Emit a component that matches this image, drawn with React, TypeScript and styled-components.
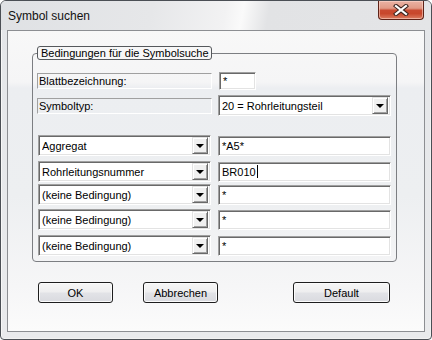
import React from "react";
import styled, { createGlobalStyle } from "styled-components";

const Global = createGlobalStyle`
  html, body { margin: 0; padding: 0; background: #ffffff; }
  body { font-family: "Liberation Sans", Arial, sans-serif; font-size: 11px; color: #000; }
  * { box-sizing: border-box; }
`;

const Window = styled.div`
  width: 432px;
  height: 340px;
  border: 1px solid #4b4f55;
  border-radius: 6px 6px 4px 4px;
  background: linear-gradient(180deg, #e4e6e9 0%, #e9eaec 100%);
  box-shadow: inset 1px 1px 0 #f7f7f7, inset -1px -1px 0 #f2f2f2;
  display: flex;
  flex-direction: column;
  overflow: hidden;
`;

const TitleBar = styled.div`
  height: 29px;
  display: flex;
  align-items: center;
  justify-content: space-between;
  padding-left: 7px;
  padding-right: 7px;
  background: linear-gradient(100deg, #dfe1e4 0%, #e6e7e9 35%, #f2f2f3 52%, #fafafa 56%, #e2e3e5 62%, #e4e5e7 100%);
`;

const Title = styled.span`
  font-family: "Liberation Sans", Arial, sans-serif;
  font-size: 12px;
  color: #111;
  margin-top: 1px;
`;

const CloseButton = styled.div`
  align-self: flex-start;
  width: 46px;
  height: 20px;
  margin-top: -1px;
  border: 1px solid #5e2217;
  border-top-color: #7a3a2e;
  border-radius: 0 0 4px 4px;
  background: linear-gradient(180deg, #eab2a4 0%, #e19a86 40%, #c94a31 52%, #c8472c 70%, #dc7d62 100%);
  box-shadow: inset 0 0 0 1px rgba(255, 220, 210, 0.55);
  display: flex;
  align-items: center;
  justify-content: center;
`;

const ClientWrap = styled.div`
  flex: 1;
  display: flex;
  padding: 0 6px 7px 6px;
`;

const Client = styled.div`
  flex: 1;
  border: 1px solid #8c8e92;
  background: linear-gradient(180deg, #f8f8f8 0%, #f5f5f6 17%, #eceef1 19%, #edeff1 55%, #f6f6f7 85%, #fbfbfb 100%);
  display: flex;
  flex-direction: column;
  padding-left: 24px;
`;

const Group = styled.fieldset`
  margin: 15px 0 0 0;
  width: 365px;
  padding: 0 5px 5px 4px;
  border: 1px solid #7c7e82;
  border-radius: 4px;
  min-width: 0;
`;

const Legend = styled.legend`
  margin-left: 0;
  padding: 0 2px 0 3px;
  height: 14px;
  line-height: 12px;
  border: 1px solid #55585c;
  border-radius: 3px;
  font-size: 11px;
  white-space: nowrap;
`;

const Row = styled.div<{ $top: number; $h: number }>`
  display: flex;
  align-items: center;
  height: ${(p) => p.$h}px;
  margin-top: ${(p) => p.$top}px;
  gap: 6px;
`;

const Label = styled.div`
  width: 175px;
  height: 16px;
  line-height: 14px;
  padding-left: 1px;
  border: 1px solid;
  border-color: #a0a0a0 #ffffff #ffffff #a0a0a0;
  white-space: nowrap;
`;

const sunken = `
  background: #ffffff;
  border: 1px solid;
  border-color: #a0a0a0 #ffffff #ffffff #a0a0a0;
  box-shadow: inset 1px 1px 0 #696969, inset -1px -1px 0 #e3e3e3;
`;

const Edit = styled.div<{ $w: number; $h: number; $ml?: number }>`
  ${sunken}
  width: ${(p) => p.$w}px;
  height: ${(p) => p.$h}px;
  margin-left: ${(p) => p.$ml ?? 0}px;
  padding: 0 2px 0 3px;
  display: flex;
  align-items: center;
  white-space: nowrap;
`;

const Caret = styled.span`
  display: inline-block;
  width: 1px;
  height: 13px;
  background: #000;
  margin-left: 1px;
`;

const Combo = styled.div<{ $w: number; $ml?: number }>`
  ${sunken}
  width: ${(p) => p.$w}px;
  height: 21px;
  margin-left: ${(p) => p.$ml ?? 0}px;
  display: flex;
  align-items: center;
  padding: 1px 2px 1px 3px;
`;

const ComboText = styled.span`
  flex: 1;
  white-space: nowrap;
  overflow: hidden;
`;

const DropButton = styled.span`
  width: 16px;
  height: 17px;
  background: #f0f0f0;
  border: 1px solid;
  border-color: #e3e3e3 #696969 #696969 #e3e3e3;
  box-shadow: inset 1px 1px 0 #ffffff, inset -1px -1px 0 #a0a0a0;
  display: flex;
  align-items: center;
  justify-content: center;
`;

const Arrow = styled.span`
  width: 0;
  height: 0;
  border-left: 4px solid transparent;
  border-right: 4px solid transparent;
  border-top: 4px solid #000;
  margin-top: 1px;
`;

const ButtonRow = styled.div`
  display: flex;
  margin-top: 20px;
  padding-left: 6px;
`;

const Button = styled.div<{ $w: number; $ml: number }>`
  width: ${(p) => p.$w}px;
  height: 21px;
  margin-left: ${(p) => p.$ml}px;
  border: 1px solid #1e1e1e;
  border-radius: 3px;
  background: linear-gradient(180deg, #f6f6f6 0%, #eeeeef 48%, #e2e3e7 52%, #d9dadf 100%);
  box-shadow: inset 0 0 0 1px #fbfbfb;
  display: flex;
  align-items: center;
  justify-content: center;
  font-size: 11px;
`;

const CloseGlyph = () => (
  <svg width="16" height="12" viewBox="0 0 16 12">
    <path d="M3 2 L13 10 M13 2 L3 10" stroke="#3d2520" strokeWidth="4.2" strokeLinecap="square" />
    <path d="M3 2 L13 10 M13 2 L3 10" stroke="#ffffff" strokeWidth="2.2" strokeLinecap="square" />
  </svg>
);

const ComboBox = ({ text, w, ml }: { text: string; w: number; ml?: number }) => (
  <Combo $w={w} $ml={ml}>
    <ComboText>{text}</ComboText>
    <DropButton>
      <Arrow />
    </DropButton>
  </Combo>
);

const conditions = [
  { sel: "Aggregat", val: "*A5*", top: 19, caret: false },
  { sel: "Rohrleitungsnummer", val: "BR010", top: 5, caret: true },
  { sel: "(keine Bedingung)", val: "*", top: 2, caret: false },
  { sel: "(keine Bedingung)", val: "*", top: 4, caret: false },
  { sel: "(keine Bedingung)", val: "*", top: 5, caret: false },
];

export default function App() {
  return (
    <>
      <Global />
      <Window>
        <TitleBar>
          <Title>Symbol suchen</Title>
          <CloseButton>
            <CloseGlyph />
          </CloseButton>
        </TitleBar>
        <ClientWrap>
          <Client>
            <Group>
              <Legend>Bedingungen für die Symbolsuche</Legend>
              <Row $top={12} $h={18}>
                <Label>Blattbezeichnung:</Label>
                <Edit $w={37} $h={18} $ml={1}>*</Edit>
              </Row>
              <Row $top={5} $h={21}>
                <Label>Symboltyp:</Label>
                <ComboBox text="20 = Rohrleitungsteil" w={173} />
              </Row>
              {conditions.map((c, i) => (
                <Row key={i} $top={c.top} $h={21}>
                  <ComboBox text={c.sel} w={173} ml={1} />
                  <Edit $w={173} $h={20} $ml={1}>
                    {c.val}
                    {c.caret && <Caret />}
                  </Edit>
                </Row>
              ))}
            </Group>
            <ButtonRow>
              <Button $w={75} $ml={0}>OK</Button>
              <Button $w={75} $ml={30}>Abbrechen</Button>
              <Button $w={97} $ml={75}>Default</Button>
            </ButtonRow>
          </Client>
        </ClientWrap>
      </Window>
    </>
  );
}
